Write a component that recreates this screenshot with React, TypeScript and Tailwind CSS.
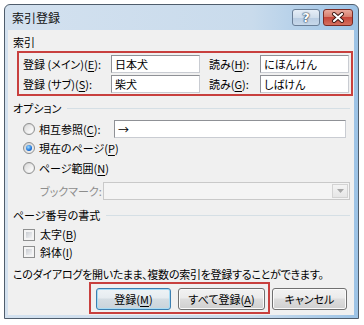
import React from "react";

const U = ({ children }: { children: React.ReactNode }) => (
  <span className="underline underline-offset-[2px] decoration-[1px]">{children}</span>
);

function Radio({ checked }: { checked?: boolean }) {
  return (
    <span className="w-[12px] h-[12px] rounded-full border border-[#8e8f8f] bg-[linear-gradient(135deg,#cfcfcf,#f6f6f6)] flex items-center justify-center shrink-0">
      {checked ? (
        <span className="w-[6px] h-[6px] rounded-full bg-[radial-gradient(circle_at_40%_35%,#9fdcff,#1c72d8_60%,#0a47a3)]" />
      ) : (
        <span className="w-[8px] h-[8px] rounded-full bg-[linear-gradient(135deg,#dcdcdc,#ffffff)]" />
      )}
    </span>
  );
}

function Check() {
  return (
    <span className="w-[12px] h-[12px] border border-[#8e8f8f] bg-[#f4f4f4] p-[2px] shrink-0 flex">
      <span className="block flex-1 bg-[linear-gradient(135deg,#c9ccd1,#f1f2f4)]" />
    </span>
  );
}

function Btn({ children, w, def }: { children: React.ReactNode; w: string; def?: boolean }) {
  return (
    <div
      className={
        "h-[22px] rounded-[3px] flex items-center justify-center shrink-0 " +
        w +
        (def
          ? " border border-[#3c7fb1] bg-[linear-gradient(#eef3f6_0%,#e6ecf0_45%,#d4dde3_50%,#c9d3da_100%)] shadow-[inset_0_0_0_1px_#a6dcf5]"
          : " border border-[#707070] bg-[linear-gradient(#f2f2f2_0%,#ebebeb_45%,#dddddd_50%,#cfcfcf_100%)] shadow-[inset_0_0_0_1px_#fbfbfb]")
      }
    >
      {children}
    </div>
  );
}

function Input({ w, children }: { w: string; children?: React.ReactNode }) {
  return (
    <div className={"h-[18px] bg-white border border-[#8f9196] border-b-[#c9ccd2] border-r-[#c9ccd2] flex items-center pl-[3px] shrink-0 " + w}>
      {children}
    </div>
  );
}

export default function App() {
  return (
    <div className="w-[364px] h-[325px] bg-white pt-[4px] pl-[4px] text-[11px] text-black font-['Noto_Sans_CJK_JP','Noto_Sans',sans-serif] [font-feature-settings:'palt'] leading-none">
      <div className="w-[355px] h-[315px] rounded-t-[6px] border border-[#4f5d6c] bg-[linear-gradient(90deg,#d3e1ef_0%,#c9dbec_70%,#9cc3e6_100%)] flex flex-col pl-[3px] pr-[4px] pb-[3px]">
        {/* title bar */}
        <div className="h-[25px] flex items-start shrink-0">
          <div className="pl-[4px] pt-[7px] text-[12px] text-[#111]">索引登録</div>
          <div className="flex-1" />
          <div className="flex gap-[3px] pt-[4px] pr-[1px]">
            <div className="w-[28px] h-[17px] rounded-[3px] border border-[#6a7f97] bg-[linear-gradient(#e6eef7_0%,#d0deec_50%,#b8cce2_51%,#c7d8ea_100%)] flex items-center justify-center">
              <span className="text-white font-bold text-[13px] font-['DejaVu_Sans',sans-serif] [text-shadow:0_0_1px_#2b3e55,0_0_1px_#2b3e55,0_0_2px_#2b3e55]">?</span>
            </div>
            <div className="w-[30px] h-[17px] rounded-[3px] border border-[#7a2b24] bg-[linear-gradient(#e9a99c_0%,#d77f6f_45%,#c5463a_50%,#d5705f_100%)] flex items-center justify-center">
              <svg width="14" height="11" viewBox="0 0 14 11">
                <path d="M3 2 L11 9 M11 2 L3 9" stroke="#3a1510" strokeWidth="4" strokeLinecap="round" />
                <path d="M3 2 L11 9 M11 2 L3 9" stroke="#ffffff" strokeWidth="2.2" strokeLinecap="round" />
              </svg>
            </div>
          </div>
        </div>
        {/* content */}
        <div className="flex-1 bg-[#f0f0f0] flex flex-col">
          <div className="h-[21px] pt-[3px] pl-[5px] flex items-center">索引</div>
          <div className="ml-[9px] w-[336px] h-[45px] border-2 border-[#c8403e] flex flex-col pt-[2px] gap-[2px]">
            <div className="h-[18px] flex items-center pl-[4px]">
              <div className="w-[88px] whitespace-nowrap">登録 (メイン)(<U>E</U>):</div>
              <Input w="w-[89px]">日本犬</Input>
              <div className="w-[60px] pl-[9px] whitespace-nowrap">読み(<U>H</U>):</div>
              <Input w="w-[89px]">にほんけん</Input>
            </div>
            <div className="h-[18px] flex items-center pl-[4px]">
              <div className="w-[88px] whitespace-nowrap">登録 (サブ)(<U>S</U>):</div>
              <Input w="w-[89px]">柴犬</Input>
              <div className="w-[60px] pl-[9px] whitespace-nowrap">読み(<U>G</U>):</div>
              <Input w="w-[89px]">しばけん</Input>
            </div>
          </div>
          <div className="h-[24px] flex items-center pl-[5px] pr-[4px]">
            <span>オプション</span>
            <span className="flex-1 h-px bg-[#d5dfe5] ml-[6px]" />
          </div>
          <div className="h-[18px] flex items-center pl-[15px]">
            <Radio />
            <span className="ml-[4px] w-[75px] whitespace-nowrap">相互参照(<U>C</U>):</span>
            <Input w="w-[232px]">→</Input>
          </div>
          <div className="h-[20px] flex items-center pl-[15px]">
            <Radio checked />
            <span className="ml-[4px]">現在のページ(<U>P</U>)</span>
          </div>
          <div className="h-[20px] flex items-center pl-[15px]">
            <Radio />
            <span className="ml-[4px]">ページ範囲(<U>N</U>)</span>
          </div>
          <div className="mt-[4px] h-[18px] flex items-center pl-[32px]">
            <span className="w-[63px] text-[#8d8d8d] whitespace-nowrap">ブックマーク:</span>
            <div className="w-[247px] h-[18px] border border-[#c9c9c9] bg-[#f4f4f4] flex justify-end p-px">
              <div className="w-[16px] h-full border border-[#d3d3d3] bg-[linear-gradient(#f4f4f4,#e6e6e6)] flex items-center justify-center">
                <svg width="7" height="4" viewBox="0 0 7 4">
                  <path d="M0 0 H7 L3.5 4 Z" fill="#a7a7a7" />
                </svg>
              </div>
            </div>
          </div>
          <div className="mt-[4px] h-[22px] flex items-center pl-[5px] pr-[4px]">
            <span>ページ番号の書式</span>
            <span className="flex-1 h-px bg-[#d5dfe5] ml-[6px]" />
          </div>
          <div className="h-[17px] flex items-center pl-[15px]">
            <Check />
            <span className="ml-[5px]">太字(<U>B</U>)</span>
          </div>
          <div className="h-[18px] flex items-center pl-[15px]">
            <Check />
            <span className="ml-[5px]">斜体(<U>I</U>)</span>
          </div>
          <div className="mt-[5px] h-[16px] flex items-center pl-[5px] whitespace-nowrap tracking-[-0.25px]">
            このダイアログを開いたまま、複数の索引を登録することができます。
          </div>
          <div className="flex items-start">
            <div className="ml-[81px] w-[181px] h-[32px] border-2 border-[#c8403e] flex pt-[4px] pl-[5px] gap-[7px]">
              <Btn w="w-[75px]" def>
                登録(<U>M</U>)
              </Btn>
              <Btn w="w-[87px]">
                すべて登録(<U>A</U>)
              </Btn>
            </div>
            <div className="ml-[2px] pt-[6px]">
              <Btn w="w-[75px]">キャンセル</Btn>
            </div>
          </div>
        </div>
      </div>
    </div>
  );
}
